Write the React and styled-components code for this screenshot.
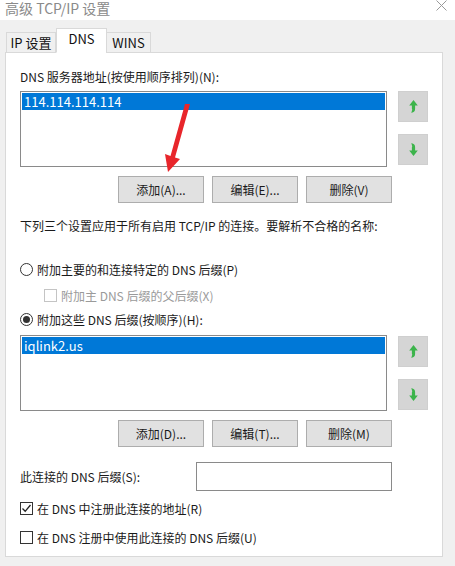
import React from "react";
import styled, { createGlobalStyle } from "styled-components";

const Global = createGlobalStyle`
  html, body { margin: 0; padding: 0; background: #f0f0f0; }
  body { font-family: "Noto Sans CJK SC", "Noto Sans", sans-serif; }
  * { box-sizing: border-box; }
`;

const Window = styled.div`
  position: relative;
  width: 455px;
  height: 566px;
  overflow: hidden;
  background: #f0f0f0;
  font-family: "Noto Sans CJK SC", "Noto Sans", sans-serif;
  font-size: 12px;
  color: #1a1a1a;
`;

const TitleBar = styled.div`
  height: 20px;
  background: #fff;
  display: flex;
  justify-content: space-between;
  align-items: flex-start;
  padding: 0 8px 0 5px;
`;

const Title = styled.div`
  font-size: 14px;
  line-height: 16px;
  color: #8a8a8a;
`;

const Body = styled.div`
  padding: 9px 12px 0 5px;
`;

const TabStrip = styled.div`
  display: flex;
  align-items: flex-end;
  height: 24px;
  padding-left: 2px;
  position: relative;
  z-index: 1;
  margin-bottom: -1px;
`;

const Tab = styled.div`
  height: ${(p) => (p.$active ? "25px" : "21px")};
  width: ${(p) => p.$w}px;
  display: flex;
  align-items: center;
  justify-content: center;
  padding-bottom: ${(p) => (p.$active ? "4px" : "0")};
  font-size: 13px;
  color: #111;
  background: ${(p) => (p.$active ? "#fff" : "#f0f0f0")};
  border: 1px solid #d9d9d9;
  border-bottom: ${(p) => (p.$active ? "1px solid #fff" : "1px solid #d9d9d9")};
  margin-left: ${(p) => (p.$active ? "0" : "-1px")};
`;

const Panel = styled.div`
  width: 438px;
  height: 505px;
  background: #fff;
  border: 1px solid #d9d9d9;
  padding: 0 14px;
  display: flex;
  flex-direction: column;
`;

const Label = styled.div`
  line-height: 16px;
  height: 16px;
  white-space: nowrap;
  margin-top: ${(p) => p.$mt || 0}px;
  color: ${(p) => (p.$disabled ? "#9a9a9a" : "#1a1a1a")};
`;

const ListRow = styled.div`
  display: flex;
  margin-top: ${(p) => p.$mt}px;
`;

const ListBox = styled.div`
  width: 372px;
  height: 76px;
  border: 1px solid #8a8a8a;
  padding: 1px;
`;

const ListItem = styled.div`
  height: 17px;
  line-height: 17px;
  background: #0078d7;
  color: #fff;
  font-size: 13px;
  padding-left: 2px;
`;

const MoveCol = styled.div`
  display: flex;
  flex-direction: column;
  gap: 12px;
  margin-left: 11px;
  padding-top: ${(p) => p.$pt || 0}px;
`;

const MoveButton = styled.div`
  width: 30px;
  height: 31px;
  background: #d5d5d5;
  border: 1px solid #cfcfcf;
  display: flex;
  align-items: center;
  justify-content: center;
`;

const ButtonRow = styled.div`
  display: flex;
  gap: 8px;
  width: 372px;
  justify-content: flex-end;
  margin-top: ${(p) => p.$mt}px;
`;

const Button = styled.div`
  width: 86px;
  height: 27px;
  background: #e1e1e1;
  border: 1px solid #adadad;
  display: flex;
  align-items: center;
  justify-content: center;
  color: #1a1a1a;
`;

const OptionRow = styled.div`
  display: flex;
  align-items: center;
  gap: 4px;
  height: 16px;
  margin-top: ${(p) => p.$mt}px;
  padding-left: ${(p) => p.$indent || 0}px;
  color: ${(p) => (p.$disabled ? "#9a9a9a" : "#1a1a1a")};
  white-space: nowrap;
`;

const Radio = styled.span`
  width: 13px;
  height: 13px;
  border-radius: 50%;
  border: 1px solid #333;
  background: #fff;
  display: flex;
  align-items: center;
  justify-content: center;
  flex: none;
  &::after {
    content: "";
    width: 7px;
    height: 7px;
    border-radius: 50%;
    background: ${(p) => (p.$on ? "#333" : "transparent")};
  }
`;

const Check = styled.span`
  width: 13px;
  height: 13px;
  border: 1px solid ${(p) => (p.$disabled ? "#c4c4c4" : "#333")};
  background: #fff;
  display: flex;
  align-items: center;
  justify-content: center;
  flex: none;
`;

const SuffixRow = styled.div`
  display: flex;
  align-items: center;
  margin-top: 15px;
  height: 29px;
`;

const SuffixInput = styled.div`
  width: 196px;
  height: 29px;
  border: 1px solid #8a8a8a;
  margin-left: auto;
  margin-right: 36px;
`;

const Close = styled.svg`
  margin-top: 0;
`;

const Overlay = styled.svg`
  position: absolute;
  left: 0;
  top: 0;
  pointer-events: none;
`;

const UpIcon = () => (
  <svg width="11" height="15" viewBox="0 0 10 14">
    <path d="M5 1 L9 6 L6.5 6 L6.5 9 Q6.5 12 4 12.5 L3 13 L3.5 11 Q4.2 10 3.5 9 L3.5 6 L1 6 Z" fill="#3cb44b" />
  </svg>
);

const DownIcon = () => (
  <svg width="11" height="15" viewBox="0 0 10 14">
    <path d="M5 13 L9 8 L6.5 8 L6.5 5 Q6.5 2 4 1.5 L3 1 L3.5 3 Q4.2 4 3.5 5 L3.5 8 L1 8 Z" fill="#3cb44b" />
  </svg>
);

const CheckMark = () => (
  <svg width="11" height="11" viewBox="0 0 11 11">
    <path d="M1.5 5.5 L4.2 8.3 L9.5 2" stroke="#222" strokeWidth="1.3" fill="none" />
  </svg>
);

export default function App() {
  return (
    <Window>
      <Global />
      <TitleBar>
        <Title>高级 TCP/IP 设置</Title>
        <Close width="11" height="11" viewBox="0 0 11 11">
          <path d="M0.5 0.5 L10.5 10.5 M10.5 0.5 L0.5 10.5" stroke="#999" strokeWidth="1" />
        </Close>
      </TitleBar>
      <Body>
        <TabStrip>
          <Tab $w={50}>IP 设置</Tab>
          <Tab $w={51} $active>DNS</Tab>
          <Tab $w={45}>WINS</Tab>
        </TabStrip>
        <Panel>
          <Label $mt={16}>DNS 服务器地址(按使用顺序排列)(N):</Label>
          <ListRow $mt={6}>
            <ListBox>
              <ListItem>114.114.114.114</ListItem>
            </ListBox>
            <MoveCol>
              <MoveButton><UpIcon /></MoveButton>
              <MoveButton><DownIcon /></MoveButton>
            </MoveCol>
          </ListRow>
          <ButtonRow $mt={9}>
            <Button>添加(A)...</Button>
            <Button>编辑(E)...</Button>
            <Button>删除(V)</Button>
          </ButtonRow>
          <Label $mt={15}>下列三个设置应用于所有启用 TCP/IP 的连接。要解析不合格的名称:</Label>
          <OptionRow $mt={27}>
            <Radio />
            附加主要的和连接特定的 DNS 后缀(P)
          </OptionRow>
          <OptionRow $mt={10} $indent={24} $disabled>
            <Check $disabled />
            附加主 DNS 后缀的父后缀(X)
          </OptionRow>
          <OptionRow $mt={8}>
            <Radio $on />
            附加这些 DNS 后缀(按顺序)(H):
          </OptionRow>
          <ListRow $mt={8}>
            <ListBox>
              <ListItem>iqlink2.us</ListItem>
            </ListBox>
            <MoveCol $pt={1}>
              <MoveButton><UpIcon /></MoveButton>
              <MoveButton><DownIcon /></MoveButton>
            </MoveCol>
          </ListRow>
          <ButtonRow $mt={9}>
            <Button>添加(D)...</Button>
            <Button>编辑(T)...</Button>
            <Button>删除(M)</Button>
          </ButtonRow>
          <SuffixRow>
            <span>此连接的 DNS 后缀(S):</span>
            <SuffixInput />
          </SuffixRow>
          <OptionRow $mt={9}>
            <Check><CheckMark /></Check>
            在 DNS 中注册此连接的地址(R)
          </OptionRow>
          <OptionRow $mt={13}>
            <Check />
            在 DNS 注册中使用此连接的 DNS 后缀(U)
          </OptionRow>
        </Panel>
      </Body>
      <Overlay width="455" height="566" viewBox="0 0 455 566">
        <path d="M190 104 L185 104 L170.5 156 L165 154 L168 172 L180 159 L175 157.5 Z" fill="#e8262b" />
      </Overlay>
    </Window>
  );
}
